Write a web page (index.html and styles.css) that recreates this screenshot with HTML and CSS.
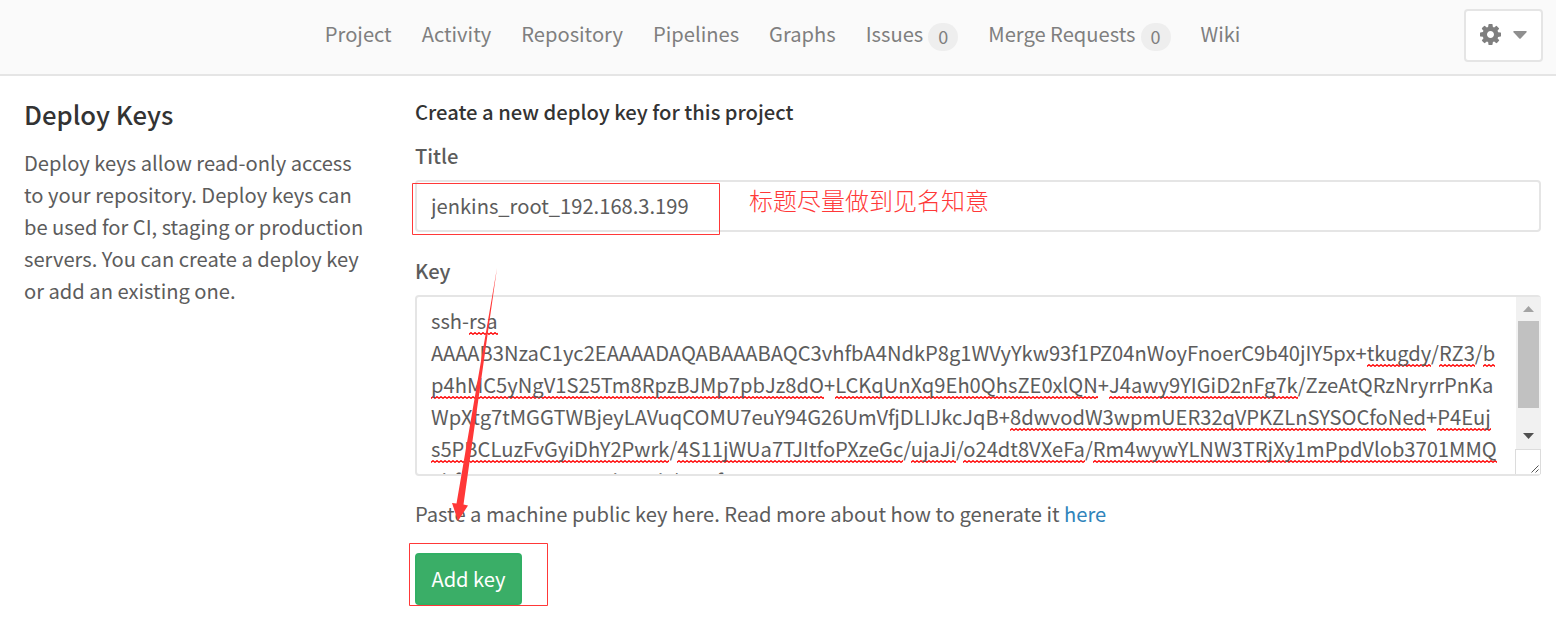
FILE: index.html
```html
<!DOCTYPE html>
<html lang="en">
<head>
    <meta charset="UTF-8">
    <meta name="viewport" content="width=device-width, initial-scale=1.0">
    <title>Deploy Keys</title>
    <link rel="stylesheet" href="styles.css">
</head>
<body>
    <div class="layout-nav">
        <ul class="nav-links">
            <li><a>Project</a></li>
            <li><a>Activity</a></li>
            <li><a>Repository</a></li>
            <li><a>Pipelines</a></li>
            <li><a>Graphs</a></li>
            <li><a>Issues</a><span class="badge">0</span></li>
            <li><a>Merge Requests</a><span class="badge">0</span></li>
            <li><a>Wiki</a></li>
        </ul>
        <button class="settings-btn" type="button" aria-label="Settings">
            <svg class="icon-cog" viewBox="0 0 1536 1536"><path fill="#7f7f7f" d="M1024 768q0-106-75-181t-181-75-181 75-75 181 75 181 181 75 181-75 75-181zm512-109v222q0 12-8 23t-20 13l-185 28q-19 54-39 91 35 50 107 138 10 12 10 25t-9 23q-27 37-99 108t-94 71q-12 0-26-9l-138-108q-44 23-91 38-16 136-29 186-7 28-36 28H657q-14 0-24.500-8.500T621 1506l-28-184q-49-16-90-37l-141 107q-10 9-25 9-14 0-25-11-126-114-165-168-7-10-7-23 0-12 8-23 15-21 51-66.500t54-70.500q-27-50-41-99L29 913q-13-2-21-12.500T0 877V655q0-12 8-23t19-13l186-28q14-46 39-92-40-57-107-138-10-12-10-24 0-10 9-23 26-36 98.500-107.500T337 135q13 0 26 10l138 107q44-23 91-38 16-136 29-186 7-28 36-28h222q14 0 24.500 8.500T915 30l28 184q49 16 90 37l142-107q9-9 24-9 13 0 25 10 129 119 165 170 7 8 7 22 0 12-8 23-15 21-51 66.500t-54 70.500q26 50 41 98l183 28q13 2 21 12.500t8 23.500z"/></svg>
            <svg class="icon-caret" viewBox="0 0 14 8"><path fill="#8f8f8f" d="M.8 0h12.400q.8.500.3 1.300L7.700 7.500q-.7.600-1.400 0L.5 1.300Q0 .5.800 0z"/></svg>
        </button>
    </div>

    <div class="content">
        <div class="settings-sidebar">
            <h4>Deploy Keys</h4>
            <p>
                Deploy keys allow read-only access<br>
                to your repository. Deploy keys can<br>
                be used for CI, staging or production<br>
                servers. You can create a deploy key<br>
                or add an existing one.
            </p>
        </div>
        <form class="new-key">
            <h5>Create a new deploy key for this project</h5>
            <label for="title">Title</label>
            <input class="form-control" id="title" type="text" value="jenkins_root_192.168.3.199" spellcheck="false">
            <label class="key-label">Key</label>
            <div class="key-box">
                <div class="key-text">
                    <div>ssh-<u>rsa</u></div>
                    <div>AAAAB3NzaC1yc2EAAAADAQABAAABAQC3vhfbA4NdkP8g1WVyYkw93f1PZ04nWoyFnoerC9b40jIY5px+<u>tkugdy</u>/<u>RZ3</u>/<u>b</u></div>
                    <div><u>p4hMC5yNgV1S25Tm8RpzBJMp7pbJz8dO</u>+<u>LCKqUnXq9Eh0QhsZE0xlQN</u>+<u>J4awy9YIGiD2nFg7k</u>/ZzeAtQRzNryrrPnKa</div>
                    <div>WpXtg7tMGGTWBjeyLAVuqCOMU7euY94G26UmVfjDLIJkcJqB+<u>8dwvodW3wpmUER32qVPKZLnSYSOCfoNed</u>+<u>P4Euj</u></div>
                    <div><u>s5PBCLuzFvGyiDhY2Pwrk</u>/<u>4S11jWUa7TJItfoPXzeGc</u>/<u>ujaJi</u>/<u>o24dt8VXeFa</u>/<u>Rm4wywYLNW3TRjXy1mPpdVlob3701MMQ</u></div>
                    <div>vhfnwrszxuvaoncmhgqsh/wuxf</div>
                </div>
                <div class="scrollbar">
                    <div class="track">
                        <svg class="arrow" viewBox="0 0 11 6"><path fill="#a3a3a3" d="M0 6 5.500 0 11 6z"/></svg>
                        <div class="thumb"></div>
                        <svg class="arrow arrow-down" viewBox="0 0 11 6"><path fill="#505050" d="M0 0h11L5.500 6z"/></svg>
                    </div>
                    <div class="resizer">
                        <svg viewBox="0 0 8 8"><path stroke="#555" d="M.5 7.500l7-7M4.500 7.500l3-3"/></svg>
                    </div>
                </div>
            </div>
            <p class="help">Paste a machine public key here. Read more about how to generate it <a>here</a></p>
            <button class="btn-create" type="button">Add key</button>
        </form>
    </div>

    <!-- notes drawn over the form -->
    <div class="note">标题尽量做到见名知意</div>
    <svg class="marks" width="1556" height="622" viewBox="0 0 1556 622">
        <g fill="none" stroke="#ff3838">
            <path d="M412.500 183.500h307v51h-307z"/>
            <path d="M409.500 543.500h138v62h-138z"/>
        </g>
        <path fill="#ff3838" d="M497 268 463.500 504.500 468 505.500 458 521 452 503 456.500 503.500z"/>
    </svg>
</body>
</html>
```

FILE: styles.css
```css
* { margin: 0; padding: 0; box-sizing: border-box; }
body { position: relative; height: 622px; overflow: hidden; background: #fff; color: #5c5c5c; font-family: "Noto Sans CJK SC", "Noto Sans", sans-serif; font-size: 20.15px; line-height: 32px; }
button, input { font: inherit; }

.layout-nav { display: flex; align-items: flex-start; height: 76px; padding: 0 13px 0 324.8px; background: #fafafa; border-bottom: 2px solid #e5e5e5; color: #7f7f7f; }
.nav-links { display: flex; flex: 1; gap: 30px; padding-top: 18px; list-style: none; white-space: nowrap; }
.nav-links li { display: flex; }
.badge { width: 30px; height: 28px; margin: 5px 0 0 5px; border-radius: 14px; background: #eee; font-size: 18px; line-height: 27px; text-align: center; }
.settings-btn { display: flex; align-items: center; width: 79px; height: 53px; margin-top: 9px; padding-left: 14px; background: #fff; border: 2px solid #e5e5e5; border-radius: 4px; }
.icon-cog { width: 21px; height: 21px; margin-top: -2px; }
.icon-caret { width: 14px; height: 8px; margin: -1px 0 0 12px; }

.content { display: grid; grid-template-columns: 391px 1fr; padding: 20px 15px 0 24px; }
.settings-sidebar { padding-top: 2px; white-space: nowrap; }
h4 { margin-bottom: 17px; color: #333; font-size: 25.7px; font-weight: 500; line-height: 32px; }
h5 { margin-bottom: 12px; color: #333; font-size: 20.2px; font-weight: 500; }
.new-key { display: flex; flex-direction: column; align-items: flex-start; }
label { margin-bottom: 8px; font-weight: 500; }
.form-control { width: 100%; height: 52px; padding: 0 14px 2px; border: 2px solid #e5e5e5; border-radius: 4px; color: #5c5c5c; outline: none; }
.key-label { margin-top: 23px; }
.key-box { display: flex; width: 100%; height: 181px; border: 2px solid #e5e5e5; border-radius: 4px; }
.key-text { flex: 1; height: 177px; padding: 8px 0 0 14px; overflow: hidden; white-space: nowrap; }
/* spelling squiggle */
u { padding-bottom: 2px; text-decoration: none; background: url("data:image/svg+xml,%3Csvg xmlns='http://www.w3.org/2000/svg' width='4' height='3'%3E%3Cpath fill='none' stroke='%23f00' stroke-width='1.3' d='M-1 1.500L0 2.300 2 .7 4 2.300 5 1.500'/%3E%3C/svg%3E") 0 calc(100% - 2px) repeat-x; }
.scrollbar { display: flex; flex-direction: column; width: 25px; margin: 0 -2px 0 0; }
.track { display: flex; flex: 1; flex-direction: column; align-items: center; padding: 9px 0 10px; background: #f1f1f1; }
.arrow { width: 11px; height: 6px; }
.arrow-down { margin-top: auto; }
.thumb { width: 21px; height: 87px; margin-top: 9px; background: #c1c1c1; }
.resizer { display: flex; align-items: flex-end; justify-content: flex-end; height: 25px; margin-left: -1px; padding: 0 1px 1px 0; border: 1px solid #dcdcdc; border-bottom: 0; background: #fff; }
.resizer svg { width: 8px; height: 8px; }
.help { margin-top: 22px; white-space: nowrap; }
.help a { color: #3084bb; }
.btn-create { width: 107px; height: 52px; margin-top: 23px; background: #3aae67; border: 2px solid #31af64; border-radius: 4px; color: #fff; white-space: nowrap; }

.note { position: absolute; top: 184px; left: 749px; color: #ff3838; font-size: 24px; font-weight: 300; white-space: nowrap; }
.marks { position: absolute; top: 0; left: 0; pointer-events: none; }
```
